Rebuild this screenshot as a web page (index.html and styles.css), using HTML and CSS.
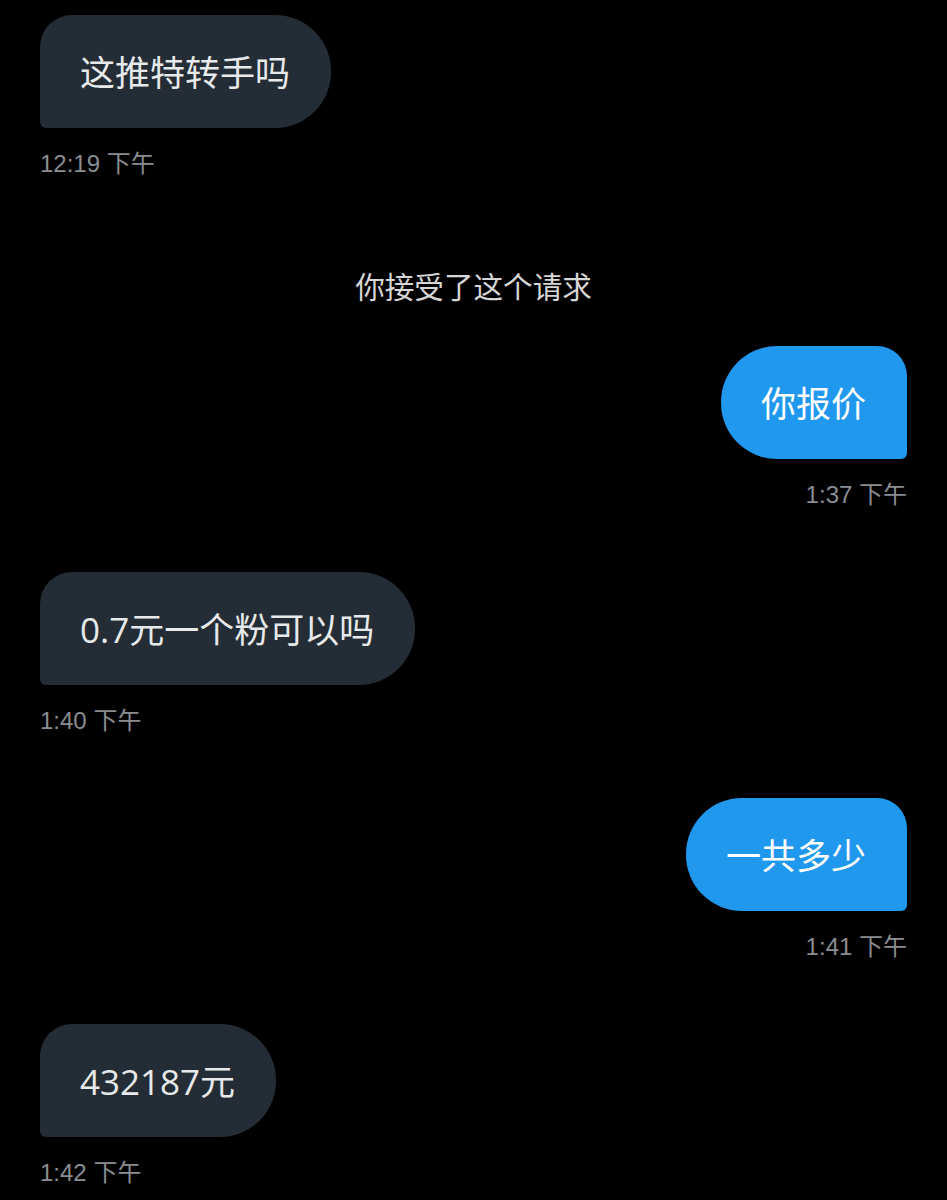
FILE: index.html
```html
<!DOCTYPE html>
<html lang="zh-CN">
<head>
    <meta charset="UTF-8">
    <title>Messages</title>
    <link rel="stylesheet" href="styles.css">
</head>
<body>
    <div class="chat">
        <div class="msg received">
            <div class="bubble">这推特转手吗</div>
            <div class="time">12:19 下午</div>
        </div>

        <div class="notice">你接受了这个请求</div>

        <div class="msg sent">
            <div class="bubble">你报价</div>
            <div class="time">1:37 下午</div>
        </div>

        <div class="msg received">
            <div class="bubble">0.7元一个粉可以吗</div>
            <div class="time">1:40 下午</div>
        </div>

        <div class="msg sent">
            <div class="bubble">一共多少</div>
            <div class="time">1:41 下午</div>
        </div>

        <div class="msg received">
            <div class="bubble">432187元</div>
            <div class="time">1:42 下午</div>
        </div>
    </div>
</body>
</html>
```

FILE: styles.css
```css
body, html {
    margin: 0;
    background-color: #000;
    color: #e7e9ea;
    font-family: "Liberation Sans", "Noto Sans CJK SC", Arial, sans-serif;
}

.chat {
    display: flex;
    flex-direction: column;
    padding: 15px 40px 0 40px;
}

.msg {
    display: flex;
    flex-direction: column;
    margin-bottom: 63px;
}

.msg.received {
    align-items: flex-start;
}

.msg.sent {
    align-items: flex-end;
}

.bubble {
    font-family: "Open Sans", "Noto Sans CJK SC", sans-serif;
    font-size: 35px;
    line-height: 44px;
    padding: 36px 41px 33px 40px;
}

.received .bubble {
    background-color: #242d35;
    border-radius: 32px 56px 56px 6px;
}

.sent .bubble {
    background-color: #1f98ee;
    color: #fff;
    border-radius: 56px 30px 6px 56px;
}

.time {
    margin-top: 21px;
    font-size: 24px;
    line-height: 29px;
    color: #8a8d91;
}

.notice {
    align-self: center;
    margin-top: 30px;
    margin-bottom: 41px;
    font-size: 29.6px;
    line-height: 34px;
    color: #d6d6d6;
}
```
